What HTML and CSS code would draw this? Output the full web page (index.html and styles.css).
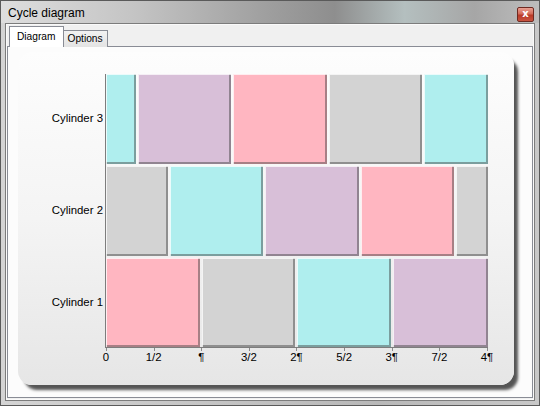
FILE: index.html
```html
<!DOCTYPE html>
<html>
<head>
<meta charset="utf-8">
<link rel="stylesheet" href="styles.css">
</head>
<body>
<div class="window">
  <div class="titlebar">
    <span class="title">Cycle diagram</span>
    <div class="close">x</div>
  </div>
  <div class="client">
    <div class="tabs">
      <div class="tab active">Diagram</div>
      <div class="tab">Options</div>
    </div>
    <div class="panel">
      <div class="chart">
        <div class="ylabels">
          <div>Cylinder 3</div>
          <div>Cylinder 2</div>
          <div>Cylinder 1</div>
        </div>
        <div class="plotwrap">
          <div class="plot">
            <div class="row">
              <div class="seg" style="flex-basis:8.333%"><div class="blk cyan"></div></div>
              <div class="seg" style="flex-basis:25%"><div class="blk purple"></div></div>
              <div class="seg" style="flex-basis:25%"><div class="blk pink"></div></div>
              <div class="seg" style="flex-basis:25%"><div class="blk gray"></div></div>
              <div class="seg last" style="flex-basis:16.667%"><div class="blk cyan"></div></div>
            </div>
            <div class="row">
              <div class="seg" style="flex-basis:16.667%"><div class="blk gray"></div></div>
              <div class="seg" style="flex-basis:25%"><div class="blk cyan"></div></div>
              <div class="seg" style="flex-basis:25%"><div class="blk purple"></div></div>
              <div class="seg" style="flex-basis:25%"><div class="blk pink"></div></div>
              <div class="seg last" style="flex-basis:8.333%"><div class="blk gray"></div></div>
            </div>
            <div class="row">
              <div class="seg" style="flex-basis:25%"><div class="blk pink"></div></div>
              <div class="seg" style="flex-basis:25%"><div class="blk gray"></div></div>
              <div class="seg" style="flex-basis:25%"><div class="blk cyan"></div></div>
              <div class="seg last" style="flex-basis:25%"><div class="blk purple"></div></div>
            </div>
          </div>
          <div class="ticks"></div>
          <div class="xlabels">
            <span>0</span><span>1/2</span><span>¶</span><span>3/2</span><span>2¶</span><span>5/2</span><span>3¶</span><span>7/2</span><span>4¶</span>
          </div>
        </div>
      </div>
    </div>
  </div>
</div>
</body>
</html>
```

FILE: styles.css
```css
html, body {
  margin: 0;
  padding: 0;
  background: #ffffff;
}
body {
  font-family: "Liberation Sans", Arial, sans-serif;
  color: #000;
}
.window {
  width: 540px;
  height: 406px;
  box-sizing: border-box;
  border: 1px solid #5a5a5a;
  background: linear-gradient(to right, #d4d4d4 0%, #c4c4c4 40%, #b8b8b8 70%, #c8c8c8 100%);
  padding: 0 4px 4px 4px;
  display: flex;
  flex-direction: column;
}
.titlebar {
  height: 22px;
  flex: none;
  display: flex;
  align-items: center;
  justify-content: space-between;
  margin: 0 -4px;
  padding: 0 5px 0 7px;
  background: linear-gradient(to right, #dedede 0%, #c4c4c4 25%, #9e9e9e 50%, #8e8e8e 62%, #b4bfbf 75%, #a6a6a6 88%, #bdbdbd 100%);
}
.title {
  font-size: 12px;
  color: #000;
  padding-top: 1px;
}
.close {
  width: 15px;
  height: 13px;
  border: 1px solid #6e2a22;
  border-radius: 2px;
  background: linear-gradient(#e8a093 0%, #d26a58 45%, #b83a28 55%, #c9533f 100%);
  color: #fff;
  font-family: "DejaVu Sans", sans-serif;
  font-weight: bold;
  font-size: 10px;
  line-height: 12px;
  text-align: center;
  margin-top: 4px;
}
.client {
  flex: 1;
  border: 1px solid #7c7c7c;
  background: #f0f0f0;
  padding: 2px 1px 2px 1px;
  display: flex;
  flex-direction: column;
  box-shadow: inset 0 0 0 1px #fafafa;
}
.tabs {
  display: flex;
  align-items: flex-end;
  padding-left: 2px;
  height: 21px;
  position: relative;
  z-index: 1;
  margin-bottom: -1px;
}
.tab {
  font-size: 10.2px;
  border: 1px solid #898c95;
  border-bottom: none;
  background: linear-gradient(#f2f2f2, #e3e3e3);
  height: 16px;
  line-height: 16px;
  padding: 0 4px 0 4px;
  margin-left: -1px;
}
.tab.active {
  background: #ffffff;
  height: 20px;
  line-height: 19px;
  padding: 0 7px 0 7px;
  margin-left: 0;
  position: relative;
  z-index: 2;
}
.panel {
  flex: 1;
  border: 1px solid #898c95;
  background: #fcfcfc;
  padding: 5px 13px 0 10px;
}
.chart {
  width: 496px;
  height: 333px;
  border-radius: 14px;
  background: linear-gradient(#fdfdfd 0%, #f4f4f4 50%, #e6e6e6 100%);
  box-shadow: 5px 6px 3px -1px #555;
  display: flex;
  padding-top: 22px;
  box-sizing: border-box;
}
.ylabels {
  width: 85px;
  margin-right: 2px;
  display: grid;
  grid-template-rows: 90px 90px 89px;
  row-gap: 2px;
  font-size: 11.4px;
}
.ylabels div {
  display: flex;
  align-items: center;
  justify-content: flex-end;
  padding-bottom: 2px;
}
.plotwrap {
  width: 383px;
}
.plot {
  border-left: 1px solid #7d7d7d;
  border-bottom: 1px solid #7d7d7d;
  display: grid;
  grid-template-rows: 90px 90px 89px;
  row-gap: 2px;
}
.row {
  display: flex;
}
.seg {
  flex-grow: 0;
  flex-shrink: 0;
  padding-right: 2px;
  box-sizing: border-box;
}
.seg.last {
  padding-right: 0;
}
.blk {
  height: 100%;
  box-shadow: inset 1px 1px 0 rgba(255,255,255,0.75), inset -2px -2px 0 rgba(60,60,60,0.45);
}
.cyan { background: #afeeee; }
.purple { background: #d8bfd8; }
.pink { background: #ffb6c1; }
.gray { background: #d3d3d3; }
.ticks {
  height: 3px;
  margin-left: 1px;
  width: 383px;
  background: repeating-linear-gradient(to right, #8a8a8a 0 1px, transparent 1px 47.625px);
}
.xlabels {
  display: flex;
  margin-left: -22.8px;
  width: 428.6px;
  font-size: 11.4px;
  line-height: 13px;
}
.xlabels span {
  flex: 1;
  text-align: center;
}
```
